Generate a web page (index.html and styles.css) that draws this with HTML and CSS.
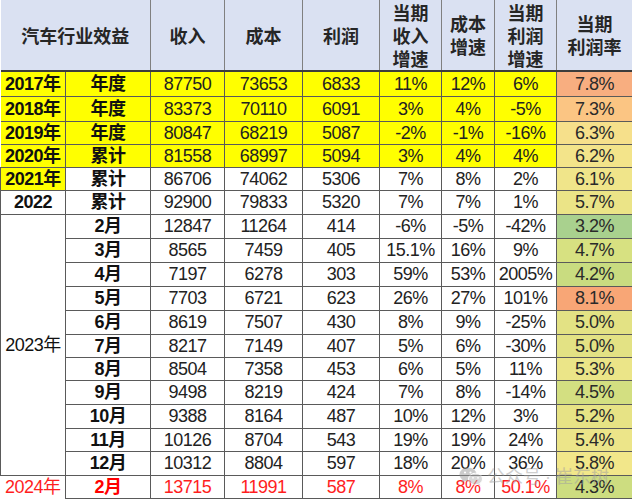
FILE: index.html
```html
<!DOCTYPE html>
<html lang="zh">
<head>
<meta charset="utf-8">
<title>汽车行业效益</title>
<link rel="stylesheet" href="styles.css">
</head>
<body>
<div class="wrap">
<table class="sheet">
  <colgroup>
    <col class="w65"><col class="w85"><col class="w74"><col class="w78"><col class="w77"><col class="w62"><col class="w53"><col class="w62"><col class="w76">
  </colgroup>
  <thead>
    <tr>
      <th colspan="2" class="th-first">汽车行业效益</th>
      <th>收入</th>
      <th>成本</th>
      <th>利润</th>
      <th>当期<br>收入<br>增速</th>
      <th>成本<br>增速</th>
      <th>当期<br>利润<br>增速</th>
      <th class="th-last">当期<br>利润率</th>
    </tr>
  </thead>
  <tbody>
    <tr class="h25 yrow"><td class="lab">2017年</td><td class="lab">年度</td><td>87750</td><td>73653</td><td>6833</td><td>11%</td><td>12%</td><td>6%</td><td class="rate" style="background:#f8ae80">7.8%</td></tr>
    <tr class="h25 yrow"><td class="lab">2018年</td><td class="lab">年度</td><td>83373</td><td>70110</td><td>6091</td><td>3%</td><td>4%</td><td>-5%</td><td class="rate" style="background:#fbc583">7.3%</td></tr>
    <tr class="h23 yrow"><td class="lab">2019年</td><td class="lab">年度</td><td>80847</td><td>68219</td><td>5087</td><td>-2%</td><td>-1%</td><td>-16%</td><td class="rate" style="background:#f6e08b">6.3%</td></tr>
    <tr class="h23 yrow"><td class="lab">2020年</td><td class="lab">累计</td><td>81558</td><td>68997</td><td>5094</td><td>3%</td><td>4%</td><td>4%</td><td class="rate" style="background:#f3e48a">6.2%</td></tr>
    <tr class="h23"><td class="lab yel">2021年</td><td class="lab">累计</td><td>86706</td><td>74062</td><td>5306</td><td>7%</td><td>8%</td><td>2%</td><td class="rate" style="background:#f0e58a">6.1%</td></tr>
    <tr class="h24"><td class="lab y2022">2022</td><td class="lab">累计</td><td>92900</td><td>79833</td><td>5320</td><td>7%</td><td>7%</td><td>1%</td><td class="rate" style="background:#ebe487">5.7%</td></tr>
    <tr class="h24"><td class="year" rowspan="11">2023年</td><td class="lab">2月</td><td>12847</td><td>11264</td><td>414</td><td>-6%</td><td>-5%</td><td>-42%</td><td class="rate" style="background:#a9d18e">3.2%</td></tr>
    <tr class="h24"><td class="lab">3月</td><td>8565</td><td>7459</td><td>405</td><td>15.1%</td><td>16%</td><td>9%</td><td class="rate" style="background:#d7e181">4.7%</td></tr>
    <tr class="h24"><td class="lab">4月</td><td>7197</td><td>6278</td><td>303</td><td>59%</td><td>53%</td><td>2005%</td><td class="rate" style="background:#c9dc80">4.2%</td></tr>
    <tr class="h24"><td class="lab">5月</td><td>7703</td><td>6721</td><td>623</td><td>26%</td><td>27%</td><td>101%</td><td class="rate" style="background:#f8a676">8.1%</td></tr>
    <tr class="h24"><td class="lab">6月</td><td>8619</td><td>7507</td><td>430</td><td>8%</td><td>9%</td><td>-25%</td><td class="rate" style="background:#e3e284">5.0%</td></tr>
    <tr class="h23"><td class="lab">7月</td><td>8217</td><td>7149</td><td>407</td><td>5%</td><td>6%</td><td>-30%</td><td class="rate" style="background:#e3e284">5.0%</td></tr>
    <tr class="h23"><td class="lab">8月</td><td>8504</td><td>7358</td><td>453</td><td>6%</td><td>5%</td><td>11%</td><td class="rate" style="background:#ebe588">5.3%</td></tr>
    <tr class="h24"><td class="lab">9月</td><td>9498</td><td>8219</td><td>424</td><td>7%</td><td>8%</td><td>-14%</td><td class="rate" style="background:#d3df81">4.5%</td></tr>
    <tr class="h24"><td class="lab">10月</td><td>9388</td><td>8164</td><td>487</td><td>10%</td><td>12%</td><td>3%</td><td class="rate" style="background:#e7e385">5.2%</td></tr>
    <tr class="h23"><td class="lab">11月</td><td>10126</td><td>8704</td><td>543</td><td>19%</td><td>19%</td><td>24%</td><td class="rate" style="background:#ece589">5.4%</td></tr>
    <tr class="h24"><td class="lab">12月</td><td>10312</td><td>8804</td><td>597</td><td>18%</td><td>20%</td><td>36%</td><td class="rate" style="background:#f2e78a">5.8%</td></tr>
    <tr class="h23 red"><td class="year y2024">2024年</td><td class="lab">2月</td><td>13715</td><td>11991</td><td>587</td><td>8%</td><td>8%</td><td>50.1%</td><td class="rate" style="background:#cddd80">4.3%</td></tr>
  </tbody>
</table>
<div class="watermark">
  <svg class="wm-icon" width="24" height="19" viewBox="0 0 24 19" aria-hidden="true">
    <ellipse cx="9" cy="7.5" rx="8.5" ry="7" fill="#9a9a9a"/>
    <path d="M3.5 12.5 L2.5 16 L6.5 13.8 Z" fill="#9a9a9a"/>
    <ellipse cx="16.5" cy="12" rx="7" ry="5.8" fill="#b4b4b4" stroke="#fff" stroke-width="1"/>
    <path d="M20.5 16.5 L21.5 18.8 L18.5 17.3 Z" fill="#b4b4b4"/>
    <circle cx="6" cy="5.5" r="1.1" fill="#fff"/>
    <circle cx="11.5" cy="5.5" r="1.1" fill="#fff"/>
    <circle cx="14" cy="10.8" r="0.9" fill="#fff"/>
    <circle cx="19" cy="10.8" r="0.9" fill="#fff"/>
  </svg>
  <span class="wm-text">公众号<span class="wm-dot">·</span>崔东树</span>
</div>
</div>
</body>
</html>
```

FILE: styles.css
```css
html, body {
  margin: 0;
  padding: 0;
  background: #ffffff;
}

.wrap {
  position: relative;
  width: 632px;
  height: 500px;
  overflow: hidden;
}

.sheet {
  border-collapse: collapse;
  table-layout: fixed;
  width: 632px;
  font-family: "Liberation Sans", "Noto Sans CJK SC", sans-serif;
  font-size: 18px;
  color: #222222;
}

.w65 { width: 65px; }
.w85 { width: 85px; }
.w74 { width: 74px; }
.w78 { width: 78px; }
.w77 { width: 77px; }
.w62 { width: 62px; }
.w53 { width: 53px; }
.w76 { width: 76px; }

.sheet th,
.sheet td {
  padding: 0;
  text-align: center;
  vertical-align: middle;
  white-space: nowrap;
}

.sheet thead tr {
  height: 71px;
}

.sheet th {
  background: #dae1f2;
  font-family: "Noto Sans CJK SC", sans-serif;
  font-weight: 700;
  font-size: 18px;
  line-height: 23px;
  color: #262626;
  border-left: 1px solid #808080;
  border-right: 1px solid #808080;
  border-bottom: 2px solid #3c3c3c;
}

.sheet th.th-first {
  border-left: none;
}

.sheet td {
  border: 1px solid #5a5a5a;
  letter-spacing: -0.5px;
  line-height: 20px;
  overflow: hidden;
}

.h25 { height: 25px; }
.h24 { height: 24px; }
.h23 { height: 23px; }

.yrow td {
  background: #ffff00;
}

.yrow td.lab:first-child,
.yel {
  border-left: none;
}

.yel {
  background: #ffff00;
}

.lab {
  font-weight: 700;
  color: #111111;
}

.y2022 {
  border-left: none;
  border-bottom: none;
}

.year {
  font-weight: 400;
  color: #111111;
  border-top: none;
  border-bottom: 1px solid #cfcfcf;
}

.red td {
  color: #ff1e1e;
}

.red td.y2024 {
  border-left: none;
  border-top: 1px solid #cfcfcf;
  border-bottom: none;
  color: #ff1e1e;
}

.red td.lab {
  color: #ff0000;
}

.sheet td.rate {
  color: #2a2a2a;
}

.watermark {
  position: absolute;
  left: 459px;
  top: 465px;
  display: flex;
  align-items: center;
  gap: 4px;
  opacity: 0.5;
}

.wm-icon {
  display: block;
}

.wm-text {
  font-family: "Noto Sans CJK SC", sans-serif;
  font-size: 18px;
  line-height: 20px;
  color: #a0a0a0;
  white-space: nowrap;
}

.wm-dot {
  display: inline-block;
  font-family: "Liberation Sans", sans-serif;
  padding: 0 4px;
}
```
